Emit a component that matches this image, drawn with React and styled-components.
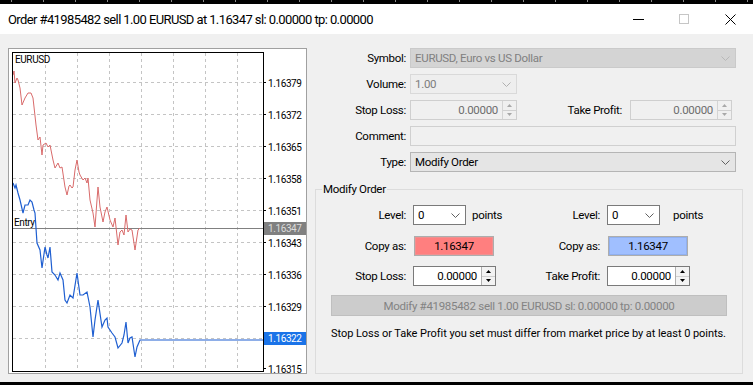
import styled, { createGlobalStyle } from "styled-components";

const GlobalStyle = createGlobalStyle`
  html, body { margin: 0; padding: 0; background: #000; }
  body { font-family: Roboto, "Liberation Sans", Arial, sans-serif; }
  * { box-sizing: border-box; }
`;

const RED = [
  [13, 75], [14, 71], [15, 83], [17, 78], [18, 80], [20, 88], [22, 105], [25, 98], [28, 93], [31, 93],
  [33, 98], [36, 125], [38, 140], [40, 137], [42, 155], [43, 145], [46, 143], [48, 147], [50, 145],
  [53, 160], [55, 168], [58, 163], [60, 168], [62, 167], [65, 187], [67, 195], [69, 186], [70, 185],
  [72, 188], [73, 187], [75, 170], [77, 160], [79, 172], [80, 175], [83, 180], [85, 178], [87, 183],
  [88, 178], [90, 200], [93, 213], [95, 227], [97, 200], [98, 187], [100, 207], [103, 222], [105, 212],
  [107, 207], [110, 220], [113, 227], [115, 218], [118, 245], [120, 232], [122, 230], [124, 235],
  [126, 215], [128, 232], [130, 229], [132, 230], [135, 250], [138, 230], [140, 228],
];

const BLUE = [
  [13, 183], [15, 188], [16, 185], [18, 193], [20, 200], [23, 213], [25, 205], [28, 205], [30, 200],
  [32, 202], [34, 210], [35, 213], [37, 243], [40, 250], [42, 268], [45, 247], [47, 255], [48, 258],
  [50, 247], [52, 272], [55, 275], [58, 280], [60, 273], [63, 280], [65, 300], [67, 303], [70, 295],
  [73, 298], [77, 273], [80, 295], [83, 295], [87, 292], [90, 307], [93, 337], [95, 320], [98, 300],
  [102, 327], [105, 320], [107, 318], [108, 327], [112, 333], [115, 337], [118, 348], [122, 343],
  [124, 335], [126, 322], [128, 343], [130, 338], [132, 337], [135, 357], [137, 347], [140, 340],
  [263, 340],
];

const PRICES = [
  ["1.16379", 83], ["1.16372", 115], ["1.16365", 147], ["1.16358", 179], ["1.16351", 211],
  ["1.16343", 243], ["1.16336", 275], ["1.16329", 307], ["1.16315", 369],
];

const VGRID = [45.5, 77.5, 109.5, 141.5, 173.5, 205.5, 237.5];
const HGRID = [82.5, 114.5, 146.5, 178.5, 210.5, 242.5, 274.5, 306.5, 338.5];

const Screen = styled.div`
  width: 753px;
  height: 385px;
  background: #000;
  display: flex;
  flex-direction: column;
  overflow: hidden;
`;

const TopStrip = styled.div`
  height: 4px;
  background: repeating-linear-gradient(90deg, transparent 0 11px, #8a8a8a 11px 12px, transparent 12px 32px);
  background-size: 100% 2px;
  background-repeat: no-repeat;
`;

const Window = styled.div`
  height: 378px;
  display: flex;
  flex-direction: column;
  background: #f0f0f0;
`;

const TitleBar = styled.div`
  height: 30px;
  background: #fff;
  display: flex;
  align-items: center;
  padding-left: 8px;
`;

const Title = styled.div`
  flex: 1;
  font-size: 13px;
  letter-spacing: -0.6px;
  color: #000;
  white-space: nowrap;
`;

const CaptionButton = styled.div`
  width: 46px;
  height: 30px;
  display: flex;
  align-items: center;
  justify-content: center;
`;

const Body = styled.div`
  flex: 1;
  display: flex;
  gap: 8px;
  padding: 14px 10px 8px 8px;
`;

const ChartPanel = styled.div`
  width: 299px;
  height: 326px;
  flex: none;
  border: 1px solid #a0a0a0;
  background: #fff;
  svg { display: block; }
`;

const Side = styled.div`
  width: 428px;
  flex: none;
  min-width: 0;
  display: flex;
  flex-direction: column;
  font-size: 11.5px;
  letter-spacing: -0.3px;
`;

const Form = styled.div`
  display: grid;
  grid-template-columns: 91px 1fr;
  column-gap: 4px;
  row-gap: 6px;
  padding-right: 7px;
`;

const Label = styled.div`
  color: #000;
  display: flex;
  align-items: center;
  justify-content: flex-end;
  height: 20px;
  white-space: nowrap;
  width: ${(p) => (p.$w ? `${p.$w}px` : "auto")};
  flex: ${(p) => (p.$grow ? 1 : "none")};
`;

const FieldRow = styled.div`
  display: flex;
  align-items: center;
  gap: 8px;
  height: 20px;
`;

const Box = styled.div`
  height: 20px;
  width: ${(p) => (p.$w ? `${p.$w}px` : "auto")};
  flex: ${(p) => (p.$w ? "none" : 1)};
  display: flex;
  align-items: center;
  border: 1px solid ${(p) => p.$border || "#7a7a7a"};
  background: ${(p) => p.$bg || "#fff"};
  color: ${(p) => p.$color || "#000"};
  margin-right: ${(p) => (p.$mr ? `${p.$mr}px` : 0)};
`;

const BoxText = styled.span`
  flex: 1;
  padding: 0 4px;
  text-align: ${(p) => (p.$right ? "right" : "left")};
  white-space: nowrap;
  overflow: hidden;
`;

const Chevron = styled.span`
  width: 20px;
  display: flex;
  align-items: center;
  justify-content: center;
`;

const Spin = styled.span`
  width: 14px;
  height: 100%;
  display: flex;
  flex-direction: column;
  border-left: 1px solid ${(p) => (p.$disabled ? "#d4d4d4" : "#b0b0b0")};
  background: ${(p) => (p.$disabled ? "#f0f0f0" : "#f3f3f3")};
`;

const SpinHalf = styled.span`
  flex: 1;
  display: flex;
  align-items: center;
  justify-content: center;
  border-top: ${(p) => (p.$bottom ? "1px solid #d0d0d0" : "none")};
`;

const Group = styled.fieldset`
  margin: 10px 0 0 0;
  padding: 9px 0 0 0;
  border: 1px solid #dcdcdc;
  flex: 1;
  min-width: 0;
`;

const Legend = styled.legend`
  color: #000;
  margin-left: 6px;
  padding: 0 1px;
  line-height: 14px;
`;

const Pair = styled.div`
  display: grid;
  grid-template-columns: 194px 1fr;
  margin-top: ${(p) => p.$mt || 0}px;
`;

const Half = styled.div`
  display: flex;
  align-items: center;
  gap: 7px;
  height: 20px;
`;

const Points = styled.span`
  margin-left: ${(p) => p.$ml}px;
`;

const CopyButton = styled.div`
  width: 80px;
  height: 20px;
  margin-left: 1px;
  display: flex;
  align-items: center;
  justify-content: center;
  color: #000;
  background: ${(p) => p.$bg};
  border: 1px solid #adadad;
  box-shadow: inset 0 0 0 1px ${(p) => p.$inner};
`;

const ActionArea = styled.div`
  padding: 9px 15px 0 15px;
`;

const ModifyButton = styled.div`
  height: 21px;
  display: flex;
  align-items: center;
  justify-content: center;
  color: #838383;
  background: #cccccc;
  border: 1px solid #bfbfbf;
  white-space: nowrap;
`;

const Note = styled.div`
  margin-top: 11px;
  font-size: 11px;
  letter-spacing: -0.05px;
  color: #000;
  white-space: nowrap;
`;

const ChevronIcon = ({ color = "#606060" }) => (
  <svg width="9" height="5" viewBox="0 0 9 5">
    <path d="M0.5 0.5 L4.5 4.5 L8.5 0.5" fill="none" stroke={color} strokeWidth="1" />
  </svg>
);

const Arrow = ({ up, color }) => (
  <svg width="5" height="3" viewBox="0 0 5 3">
    <path d={up ? "M2.5 0 L5 3 L0 3 Z" : "M0 0 L5 0 L2.5 3 Z"} fill={color} />
  </svg>
);

const Spinner = ({ disabled }) => {
  const c = disabled ? "#a8a8a8" : "#000";
  return (
    <Spin $disabled={disabled}>
      <SpinHalf><Arrow up color={c} /></SpinHalf>
      <SpinHalf $bottom><Arrow color={c} /></SpinHalf>
    </Spin>
  );
};

const pts = (arr) => arr.map(([x, y]) => `${x},${y}`).join(" ");

const chartFont = "Roboto, 'Liberation Sans', sans-serif";

const Chart = () => (
  <svg width="297" height="324" viewBox="9 49 297 324">
    <rect x="9" y="49" width="297" height="324" fill="#fff" />
    <g stroke="#c4c4c4" strokeDasharray="3 3" strokeWidth="1">
      {VGRID.map((x) => (
        <line key={x} x1={x} y1="53" x2={x} y2="371" />
      ))}
      {HGRID.map((y) => (
        <line key={y} x1="13" y1={y} x2="263" y2={y} />
      ))}
    </g>
    <line x1="13" y1="228.5" x2="263" y2="228.5" stroke="#808080" />
    <polyline points={pts(RED)} fill="none" stroke="#d96b6b" strokeWidth="1" />
    <polyline points={pts(BLUE)} fill="none" stroke="#1f5fd1" strokeWidth="1.2" />
    <rect x="12.5" y="52.5" width="251" height="319" fill="none" stroke="#000" />
    <g stroke="#000">
      {PRICES.map(([, y]) => (
        <line key={y} x1="264" y1={y - 0.5} x2="266" y2={y - 0.5} />
      ))}
    </g>
    <g fontFamily={chartFont} fontSize="10" letterSpacing="-0.4" fill="#000">
      <text x="15" y="63">EURUSD</text>
      <text x="14" y="226">Entry</text>
      {PRICES.map(([p, y]) => (
        <text key={p} x="268" y={y + 3.5}>{p}</text>
      ))}
    </g>
    <rect x="264" y="222" width="42" height="13" fill="#808080" />
    <text x="268" y="232" fontFamily={chartFont} fontSize="10" letterSpacing="-0.4" fill="#dcdcdc">1.16347</text>
    <rect x="264" y="332" width="42" height="13" fill="#1a73e8" />
    <text x="268" y="342" fontFamily={chartFont} fontSize="10" letterSpacing="-0.4" fill="#fff">1.16322</text>
  </svg>
);

export default function App() {
  return (
    <Screen>
      <GlobalStyle />
      <TopStrip />
      <Window>
        <TitleBar>
          <Title>Order #41985482 sell 1.00 EURUSD at 1.16347 sl: 0.00000 tp: 0.00000</Title>
          <CaptionButton>
            <svg width="11" height="1"><rect width="11" height="1" fill="#000" /></svg>
          </CaptionButton>
          <CaptionButton>
            <svg width="10" height="10"><rect x="0.5" y="0.5" width="9" height="9" fill="none" stroke="#c6c6c6" /></svg>
          </CaptionButton>
          <CaptionButton>
            <svg width="11" height="11" viewBox="0 0 11 11">
              <path d="M0.5 0.5 L10.5 10.5 M10.5 0.5 L0.5 10.5" stroke="#000" strokeWidth="1" />
            </svg>
          </CaptionButton>
        </TitleBar>
        <Body>
          <ChartPanel>
            <Chart />
          </ChartPanel>
          <Side>
            <Form>
              <Label>Symbol:</Label>
              <Box $bg="#d4d4d4" $border="#cacaca" $color="#808080">
                <BoxText>EURUSD, Euro vs US Dollar</BoxText>
                <Chevron><ChevronIcon color="#b8b8b8" /></Chevron>
              </Box>
              <Label>Volume:</Label>
              <FieldRow>
                <Box $w={107} $bg="#eeeeee" $border="#d9d9d9" $color="#7d7d7d">
                  <BoxText>1.00</BoxText>
                  <Chevron><ChevronIcon color="#b0b0b0" /></Chevron>
                </Box>
              </FieldRow>
              <Label>Stop Loss:</Label>
              <FieldRow>
                <Box $w={107} $bg="#f0f0f0" $border="#cfcfcf" $color="#6d6d6d">
                  <BoxText $right>0.00000</BoxText>
                  <Spinner disabled />
                </Box>
                <Label $grow>Take Profit:</Label>
                <Box $w={102} $mr={4} $bg="#f0f0f0" $border="#cfcfcf" $color="#6d6d6d">
                  <BoxText $right>0.00000</BoxText>
                  <Spinner disabled />
                </Box>
              </FieldRow>
              <Label>Comment:</Label>
              <Box $bg="#f0f0f0" $border="#d0d0d0" />
              <Label>Type:</Label>
              <Box $bg="#e5e5e5" $border="#b5b5b5">
                <BoxText>Modify Order</BoxText>
                <Chevron><ChevronIcon /></Chevron>
              </Box>
            </Form>
            <Group>
              <Legend>Modify Order</Legend>
              <Pair>
                <Half>
                  <Label $w={90}>Level:</Label>
                  <Box $w={53}>
                    <BoxText>0</BoxText>
                    <Chevron><ChevronIcon /></Chevron>
                  </Box>
                  <Points $ml={-1}>points</Points>
                </Half>
                <Half>
                  <Label $w={90}>Level:</Label>
                  <Box $w={53}>
                    <BoxText>0</BoxText>
                    <Chevron><ChevronIcon /></Chevron>
                  </Box>
                  <Points $ml={6}>points</Points>
                </Half>
              </Pair>
              <Pair $mt={11}>
                <Half>
                  <Label $w={90}>Copy as:</Label>
                  <CopyButton $bg="#ff7f7f" $inner="#f09090">1.16347</CopyButton>
                </Half>
                <Half>
                  <Label $w={90}>Copy as:</Label>
                  <CopyButton $bg="#a0bfff" $inner="#90b0f0">1.16347</CopyButton>
                </Half>
              </Pair>
              <Pair $mt={10}>
                <Half>
                  <Label $w={90}>Stop Loss:</Label>
                  <Box $w={83}>
                    <BoxText $right>0.00000</BoxText>
                    <Spinner />
                  </Box>
                </Half>
                <Half>
                  <Label $w={90}>Take Profit:</Label>
                  <Box $w={83}>
                    <BoxText $right>0.00000</BoxText>
                    <Spinner />
                  </Box>
                </Half>
              </Pair>
              <ActionArea>
                <ModifyButton>Modify #41985482 sell 1.00 EURUSD sl: 0.00000 tp: 0.00000</ModifyButton>
                <Note>Stop Loss or Take Profit you set must differ from market price by at least 0 points.</Note>
              </ActionArea>
            </Group>
          </Side>
        </Body>
      </Window>
    </Screen>
  );
}
